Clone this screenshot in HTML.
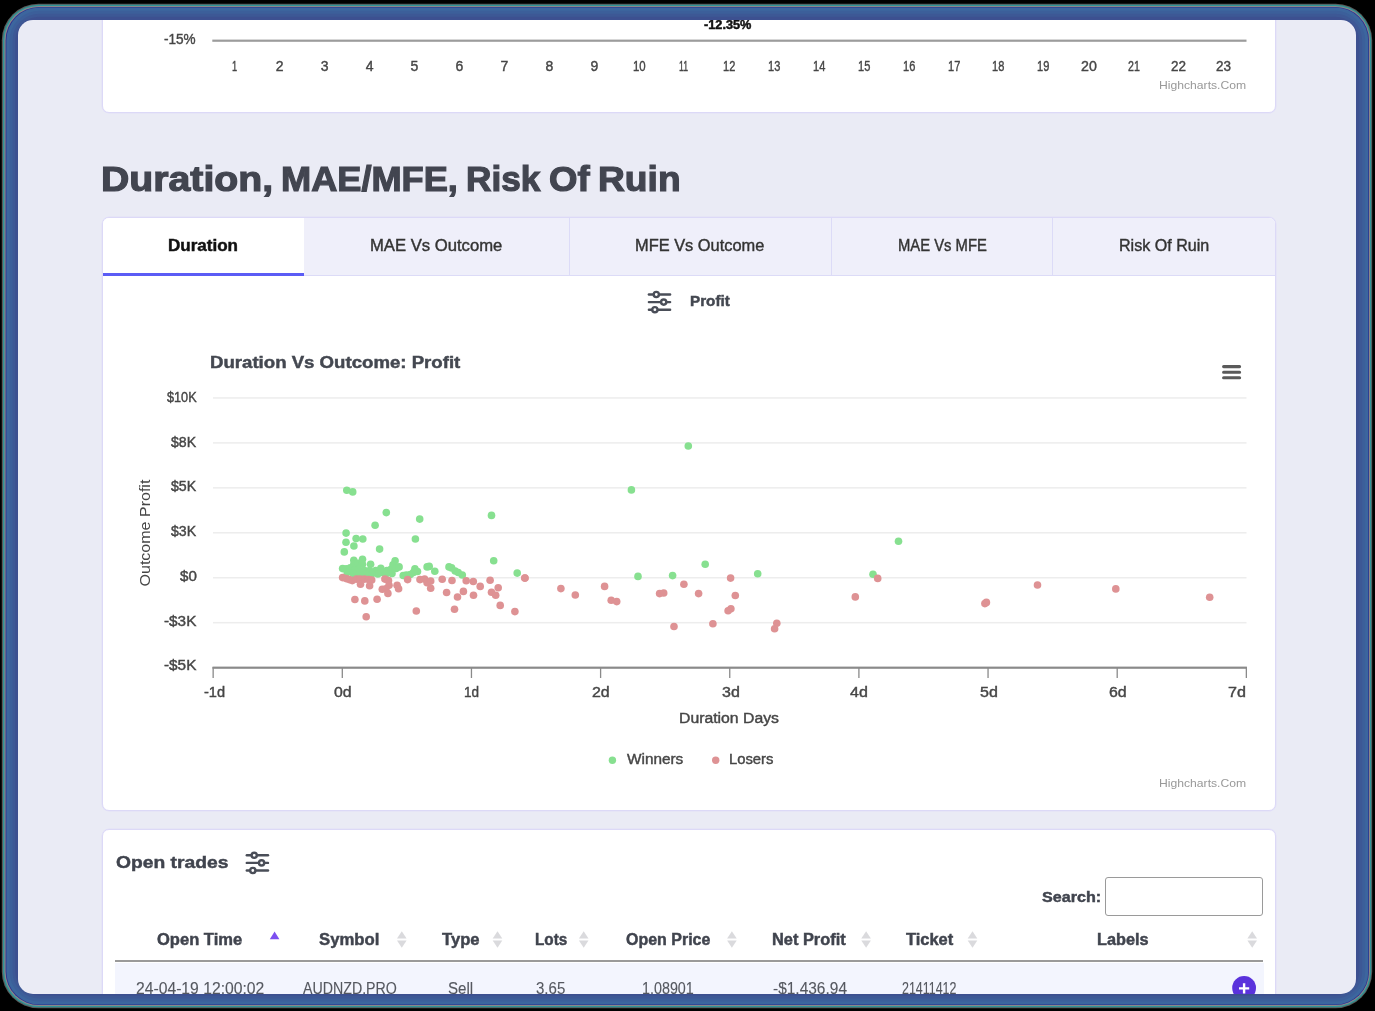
<!DOCTYPE html>
<html>
<head>
<meta charset="utf-8">
<title>Duration, MAE/MFE, Risk Of Ruin</title>
<style>
*{box-sizing:border-box;margin:0;padding:0}
html,body{width:1375px;height:1011px;overflow:hidden;background:#000;font-family:"Liberation Sans",sans-serif;}
.abs{position:absolute}
.t{position:absolute;white-space:nowrap;line-height:1;transform-origin:0 50%}
#frame{position:absolute;left:3px;top:4px;width:1368px;height:1004px;border-radius:30px;background:#465a9c;}
#screen{position:absolute;left:18px;top:20px;width:1338px;height:974px;border-radius:15px;background:#eaebf5;overflow:hidden}
/* inside #screen, coordinates are page coords via the #pg offset wrapper */
#pg{position:absolute;left:-18px;top:-20px;width:1375px;height:1011px;will-change:transform}
.card{position:absolute;background:#fff;border:1px solid #dcd9f7;border-radius:7px;box-shadow:0 0 0 0.5px #e2e0f8}
.ax{color:#474747;font-size:14px}
.th{font-weight:bold;color:#3b3f46;font-size:15px}
.td{color:#4c4f55;font-size:15px}
</style>
</head>
<body>
<svg class="abs" style="left:0;top:0" width="1375" height="1011" viewBox="0 0 1375 1011"><rect x="1.8" y="3.7" width="1370.4" height="1004.6" rx="36.5" fill="#5a5a5a"/><rect x="3.0" y="4.7" width="1368.2" height="1002.6" rx="35.5" fill="#2f9496"/><rect x="4.4" y="5.9" width="1365.6" height="1000.2" rx="34.5" fill="#8a8688"/><rect x="5.6" y="6.9" width="1363.4" height="998.2" rx="33.5" fill="#2b2f8f"/><rect x="6.4" y="7.6" width="1361.9" height="996.9" rx="32.9" fill="#3c669e"/><rect x="9.5" y="10.7" width="1355.7" height="990.9" rx="30" fill="#3c5f9a"/><rect x="12.5" y="13.7" width="1349.7" height="984.9" rx="27" fill="#3d5895"/><rect x="15.2" y="16.7" width="1344.0" height="979.1" rx="24" fill="#3d5090"/></svg>
<div id="screen"><div id="pg">

<!-- TOP CARD -->
<div class="card" style="left:102px;top:-20px;width:1174px;height:133px"></div>
<!--TOPCHART-->


<!-- TABS CARD -->
<div class="card" style="left:102px;top:217px;width:1174px;height:594px;overflow:hidden">
  <div class="abs" style="left:0;top:0;width:1174px;height:58px;background:#efeffa;border-bottom:1px solid #dcdbf7"></div>
  <div class="abs" style="left:0;top:0;width:201px;height:58px;background:#fff;border-bottom:3px solid #5b5cf5"></div>
  <div class="abs" style="left:466px;top:0;width:1px;height:57px;background:#dcdbf7"></div>
  <div class="abs" style="left:728px;top:0;width:1px;height:57px;background:#dcdbf7"></div>
  <div class="abs" style="left:949px;top:0;width:1px;height:57px;background:#dcdbf7"></div>
</div>
<!--TABS-->

<svg class="abs" style="left:0;top:0" width="1375" height="1011" viewBox="0 0 1375 1011">
<!-- top chart axis -->
<rect x="212.3" y="39.6" width="1034.2" height="2.2" fill="#9c9c9c"/>
<!-- main chart -->
<rect x="213" y="397.20" width="1033.5" height="1.5" fill="#ededed"/><rect x="213" y="442.15" width="1033.5" height="1.5" fill="#ededed"/><rect x="213" y="487.10" width="1033.5" height="1.5" fill="#ededed"/><rect x="213" y="532.05" width="1033.5" height="1.5" fill="#ededed"/><rect x="213" y="577.00" width="1033.5" height="1.5" fill="#ededed"/><rect x="213" y="621.95" width="1033.5" height="1.5" fill="#ededed"/>
<rect x="212.5" y="666.6" width="1034.4" height="2.2" fill="#8a8a8a"/>
<rect x="212.50" y="667" width="1.3" height="11" fill="#8a8a8a"/><rect x="341.65" y="667" width="1.3" height="11" fill="#8a8a8a"/><rect x="470.80" y="667" width="1.3" height="11" fill="#8a8a8a"/><rect x="599.95" y="667" width="1.3" height="11" fill="#8a8a8a"/><rect x="729.10" y="667" width="1.3" height="11" fill="#8a8a8a"/><rect x="858.25" y="667" width="1.3" height="11" fill="#8a8a8a"/><rect x="987.40" y="667" width="1.3" height="11" fill="#8a8a8a"/><rect x="1116.55" y="667" width="1.3" height="11" fill="#8a8a8a"/><rect x="1245.70" y="667" width="1.3" height="11" fill="#8a8a8a"/>
<g><circle cx="346.8" cy="490.2" r="3.8" fill="#87e090"/><circle cx="352.7" cy="491.9" r="3.8" fill="#87e090"/><circle cx="386.3" cy="512.6" r="3.8" fill="#87e090"/><circle cx="419.7" cy="519.1" r="3.8" fill="#87e090"/><circle cx="491.5" cy="515.4" r="3.8" fill="#87e090"/><circle cx="375.1" cy="525.2" r="3.8" fill="#87e090"/><circle cx="346.1" cy="533.1" r="3.8" fill="#87e090"/><circle cx="356.1" cy="538.6" r="3.8" fill="#87e090"/><circle cx="362.8" cy="539.0" r="3.8" fill="#87e090"/><circle cx="346.0" cy="542.3" r="3.8" fill="#87e090"/><circle cx="353.9" cy="546.0" r="3.8" fill="#87e090"/><circle cx="415.4" cy="539.0" r="3.8" fill="#87e090"/><circle cx="379.6" cy="549.1" r="3.8" fill="#87e090"/><circle cx="344.3" cy="551.9" r="3.8" fill="#87e090"/><circle cx="493.7" cy="560.8" r="3.8" fill="#87e090"/><circle cx="517.2" cy="573.1" r="3.8" fill="#87e090"/><circle cx="342.6" cy="568.6" r="3.8" fill="#87e090"/><circle cx="346.2" cy="568.9" r="3.8" fill="#87e090"/><circle cx="350.3" cy="567.9" r="3.8" fill="#87e090"/><circle cx="353.8" cy="560.3" r="3.8" fill="#87e090"/><circle cx="353.8" cy="564.3" r="3.8" fill="#87e090"/><circle cx="357.9" cy="563.3" r="3.8" fill="#87e090"/><circle cx="362.5" cy="559.3" r="3.8" fill="#87e090"/><circle cx="362.5" cy="564.3" r="3.8" fill="#87e090"/><circle cx="358.4" cy="569.4" r="3.8" fill="#87e090"/><circle cx="354.3" cy="570.5" r="3.8" fill="#87e090"/><circle cx="364.5" cy="570.5" r="3.8" fill="#87e090"/><circle cx="370.6" cy="564.3" r="3.8" fill="#87e090"/><circle cx="369.6" cy="570.5" r="3.8" fill="#87e090"/><circle cx="375.7" cy="570.5" r="3.8" fill="#87e090"/><circle cx="380.8" cy="568.4" r="3.8" fill="#87e090"/><circle cx="381.8" cy="572.5" r="3.8" fill="#87e090"/><circle cx="386.9" cy="570.5" r="3.8" fill="#87e090"/><circle cx="391.0" cy="569.4" r="3.8" fill="#87e090"/><circle cx="395.1" cy="560.8" r="3.8" fill="#87e090"/><circle cx="393.0" cy="564.9" r="3.8" fill="#87e090"/><circle cx="396.1" cy="568.4" r="3.8" fill="#87e090"/><circle cx="399.1" cy="566.9" r="3.8" fill="#87e090"/><circle cx="392.0" cy="573.5" r="3.8" fill="#87e090"/><circle cx="385.9" cy="574.0" r="3.8" fill="#87e090"/><circle cx="377.8" cy="574.0" r="3.8" fill="#87e090"/><circle cx="371.7" cy="574.0" r="3.8" fill="#87e090"/><circle cx="365.5" cy="574.0" r="3.8" fill="#87e090"/><circle cx="359.4" cy="574.0" r="3.8" fill="#87e090"/><circle cx="353.3" cy="573.5" r="3.8" fill="#87e090"/><circle cx="347.2" cy="572.5" r="3.8" fill="#87e090"/><circle cx="403.2" cy="575.5" r="3.8" fill="#87e090"/><circle cx="406.3" cy="575.0" r="3.8" fill="#87e090"/><circle cx="410.3" cy="574.5" r="3.8" fill="#87e090"/><circle cx="414.9" cy="568.9" r="3.8" fill="#87e090"/><circle cx="417.5" cy="571.5" r="3.8" fill="#87e090"/><circle cx="413.4" cy="572.5" r="3.8" fill="#87e090"/><circle cx="427.1" cy="566.9" r="3.8" fill="#87e090"/><circle cx="429.2" cy="566.4" r="3.8" fill="#87e090"/><circle cx="434.8" cy="571.3" r="3.8" fill="#87e090"/><circle cx="449.0" cy="566.9" r="3.8" fill="#87e090"/><circle cx="451.6" cy="567.9" r="3.8" fill="#87e090"/><circle cx="455.2" cy="571.0" r="3.8" fill="#87e090"/><circle cx="458.2" cy="572.5" r="3.8" fill="#87e090"/><circle cx="462.3" cy="575.0" r="3.8" fill="#87e090"/><circle cx="688.3" cy="446.0" r="3.8" fill="#87e090"/><circle cx="631.4" cy="489.9" r="3.8" fill="#87e090"/><circle cx="705.2" cy="564.3" r="3.8" fill="#87e090"/><circle cx="638.0" cy="576.4" r="3.8" fill="#87e090"/><circle cx="672.6" cy="575.6" r="3.8" fill="#87e090"/><circle cx="757.7" cy="573.7" r="3.8" fill="#87e090"/><circle cx="873.0" cy="574.2" r="3.8" fill="#87e090"/><circle cx="898.5" cy="541.3" r="3.8" fill="#87e090"/></g>
<g><circle cx="446.6" cy="592.5" r="3.8" fill="#de9294"/><circle cx="463.4" cy="591.4" r="3.8" fill="#de9294"/><circle cx="457.5" cy="597.0" r="3.8" fill="#de9294"/><circle cx="473.5" cy="595.3" r="3.8" fill="#de9294"/><circle cx="454.5" cy="609.3" r="3.8" fill="#de9294"/><circle cx="416.3" cy="611.0" r="3.8" fill="#de9294"/><circle cx="500.2" cy="605.4" r="3.8" fill="#de9294"/><circle cx="514.9" cy="611.6" r="3.8" fill="#de9294"/><circle cx="354.9" cy="599.5" r="3.8" fill="#de9294"/><circle cx="364.8" cy="600.9" r="3.8" fill="#de9294"/><circle cx="377.1" cy="599.2" r="3.8" fill="#de9294"/><circle cx="366.2" cy="616.7" r="3.8" fill="#de9294"/><circle cx="490.1" cy="580.2" r="3.8" fill="#de9294"/><circle cx="498.2" cy="587.7" r="3.8" fill="#de9294"/><circle cx="491.5" cy="592.3" r="3.8" fill="#de9294"/><circle cx="495.7" cy="595.3" r="3.8" fill="#de9294"/><circle cx="524.8" cy="578.0" r="3.8" fill="#de9294"/><circle cx="480.2" cy="586.4" r="3.8" fill="#de9294"/><circle cx="473.3" cy="581.5" r="3.8" fill="#de9294"/><circle cx="466.2" cy="580.7" r="3.8" fill="#de9294"/><circle cx="452.0" cy="580.5" r="3.8" fill="#de9294"/><circle cx="442.2" cy="579.3" r="3.8" fill="#de9294"/><circle cx="342.6" cy="577.6" r="3.8" fill="#de9294"/><circle cx="346.2" cy="578.6" r="3.8" fill="#de9294"/><circle cx="349.3" cy="579.6" r="3.8" fill="#de9294"/><circle cx="352.3" cy="580.6" r="3.8" fill="#de9294"/><circle cx="356.4" cy="579.1" r="3.8" fill="#de9294"/><circle cx="359.9" cy="579.1" r="3.8" fill="#de9294"/><circle cx="360.5" cy="584.2" r="3.8" fill="#de9294"/><circle cx="364.5" cy="579.1" r="3.8" fill="#de9294"/><circle cx="368.6" cy="579.6" r="3.8" fill="#de9294"/><circle cx="371.7" cy="580.1" r="3.8" fill="#de9294"/><circle cx="369.6" cy="585.7" r="3.8" fill="#de9294"/><circle cx="384.9" cy="579.1" r="3.8" fill="#de9294"/><circle cx="388.5" cy="580.6" r="3.8" fill="#de9294"/><circle cx="389.0" cy="585.2" r="3.8" fill="#de9294"/><circle cx="382.3" cy="589.3" r="3.8" fill="#de9294"/><circle cx="385.9" cy="588.8" r="3.8" fill="#de9294"/><circle cx="387.9" cy="593.4" r="3.8" fill="#de9294"/><circle cx="397.1" cy="585.2" r="3.8" fill="#de9294"/><circle cx="398.6" cy="588.8" r="3.8" fill="#de9294"/><circle cx="407.6" cy="579.6" r="3.8" fill="#de9294"/><circle cx="420.0" cy="579.6" r="3.8" fill="#de9294"/><circle cx="424.6" cy="579.1" r="3.8" fill="#de9294"/><circle cx="427.1" cy="582.7" r="3.8" fill="#de9294"/><circle cx="430.7" cy="581.1" r="3.8" fill="#de9294"/><circle cx="430.7" cy="588.3" r="3.8" fill="#de9294"/><circle cx="525.0" cy="578.1" r="3.8" fill="#de9294"/><circle cx="560.9" cy="588.6" r="3.8" fill="#de9294"/><circle cx="575.3" cy="595.0" r="3.8" fill="#de9294"/><circle cx="604.6" cy="586.4" r="3.8" fill="#de9294"/><circle cx="611.2" cy="600.2" r="3.8" fill="#de9294"/><circle cx="616.7" cy="601.6" r="3.8" fill="#de9294"/><circle cx="659.6" cy="593.6" r="3.8" fill="#de9294"/><circle cx="663.7" cy="593.0" r="3.8" fill="#de9294"/><circle cx="683.9" cy="584.2" r="3.8" fill="#de9294"/><circle cx="698.6" cy="593.6" r="3.8" fill="#de9294"/><circle cx="730.6" cy="578.1" r="3.8" fill="#de9294"/><circle cx="735.3" cy="595.5" r="3.8" fill="#de9294"/><circle cx="730.9" cy="608.8" r="3.8" fill="#de9294"/><circle cx="728.1" cy="610.7" r="3.8" fill="#de9294"/><circle cx="674.0" cy="626.5" r="3.8" fill="#de9294"/><circle cx="712.9" cy="623.7" r="3.8" fill="#de9294"/><circle cx="776.8" cy="623.2" r="3.8" fill="#de9294"/><circle cx="774.6" cy="628.7" r="3.8" fill="#de9294"/><circle cx="855.3" cy="596.9" r="3.8" fill="#de9294"/><circle cx="877.7" cy="578.4" r="3.8" fill="#de9294"/><circle cx="1037.5" cy="585.0" r="3.8" fill="#de9294"/><circle cx="1115.8" cy="588.9" r="3.8" fill="#de9294"/><circle cx="1209.7" cy="597.2" r="3.8" fill="#de9294"/><circle cx="984.9" cy="603.6" r="3.8" fill="#de9294"/><circle cx="986.4" cy="602.4" r="3.8" fill="#de9294"/></g>
<circle cx="612.4" cy="760.2" r="3.7" fill="#87e090"/>
<circle cx="715.7" cy="760.2" r="3.7" fill="#de9294"/>
<!-- hamburger -->
<g stroke="#5a5a5a" stroke-width="3.1" stroke-linecap="round"><path d="M1223.6 366.6H1239.6M1223.6 372.2H1239.6M1223.6 377.8H1239.6"/></g>
</svg>

<!-- OPEN TRADES CARD -->
<div class="card" style="left:102px;top:829px;width:1174px;height:220px"></div>

<div class="abs" style="left:1104.5px;top:876.5px;width:158.5px;height:39.5px;border:1px solid #9a9a9a;border-radius:3px;background:#fff"></div>
<div class="abs" style="left:115px;top:960.3px;width:1148px;height:2px;background:#9a9a9a"></div>
<div class="abs" style="left:115px;top:962.5px;width:1148.5px;height:40px;background:#f3f5fe"></div>
<svg class="abs" style="left:0;top:0" width="1375" height="1011" viewBox="0 0 1375 1011">
<g stroke="#4a4e58" stroke-width="2.4" stroke-linecap="round" fill="#fff"><path d="M648.9 294.5H670.1"/><circle cx="656.3" cy="294.5" r="2.6"/><path d="M648.9 302.1H670.1"/><circle cx="663.7" cy="302.1" r="2.6"/><path d="M648.9 309.7H670.1"/><circle cx="654.9" cy="309.7" r="2.6"/></g>
<g stroke="#4a4e58" stroke-width="2.4" stroke-linecap="round" fill="#fff"><path d="M246.8 855.3H268.0"/><circle cx="254.2" cy="855.3" r="2.6"/><path d="M246.8 862.9H268.0"/><circle cx="261.6" cy="862.9" r="2.6"/><path d="M246.8 870.5H268.0"/><circle cx="252.8" cy="870.5" r="2.6"/></g>
<path d="M269.8 939.3L274.6 931.6L279.4 939.3Z" fill="#7d4ff0"/>
<path d="M397.0 938.6L401.8 931.2L406.6 938.6Z" fill="#dadadd"/><path d="M397.0 940.4L401.8 947.8L406.6 940.4Z" fill="#dadadd"/><path d="M492.7 938.6L497.5 931.2L502.3 938.6Z" fill="#dadadd"/><path d="M492.7 940.4L497.5 947.8L502.3 940.4Z" fill="#dadadd"/><path d="M578.9 938.6L583.7 931.2L588.5 938.6Z" fill="#dadadd"/><path d="M578.9 940.4L583.7 947.8L588.5 940.4Z" fill="#dadadd"/><path d="M727.1 938.6L731.9 931.2L736.7 938.6Z" fill="#dadadd"/><path d="M727.1 940.4L731.9 947.8L736.7 940.4Z" fill="#dadadd"/><path d="M861.3 938.6L866.1 931.2L870.9 938.6Z" fill="#dadadd"/><path d="M861.3 940.4L866.1 947.8L870.9 940.4Z" fill="#dadadd"/><path d="M967.7 938.6L972.5 931.2L977.3 938.6Z" fill="#dadadd"/><path d="M967.7 940.4L972.5 947.8L977.3 940.4Z" fill="#dadadd"/><path d="M1247.4 938.6L1252.2 931.2L1257.0 938.6Z" fill="#dadadd"/><path d="M1247.4 940.4L1252.2 947.8L1257.0 940.4Z" fill="#dadadd"/>
<circle cx="1244.1" cy="988" r="11.9" fill="#5a32dc"/>
<path d="M1239 988.4H1249.2M1244.1 983.3V993.5" stroke="#fff" stroke-width="2.4"/>
</svg>
<div class="t" style="left:164.29px;top:32px;font-size:14px;color:#464646;transform:scaleX(0.9683);-webkit-text-stroke:0.4px #464646">-15%</div>
<div class="t" style="left:704.24px;top:19px;font-size:12px;color:#111;transform:scaleX(1.0599);font-weight:bold;-webkit-text-stroke:0.45px #111">-12.35%</div>
<div class="t" style="left:231.80px;top:59px;font-size:14px;color:#464646;transform:scaleX(0.6622);-webkit-text-stroke:0.4px #464646">1</div>
<div class="t" style="left:275.74px;top:59px;font-size:14px;color:#464646;transform:scaleX(1.0000);-webkit-text-stroke:0.4px #464646">2</div>
<div class="t" style="left:320.70px;top:59px;font-size:14px;color:#464646;transform:scaleX(1.0000);-webkit-text-stroke:0.4px #464646">3</div>
<div class="t" style="left:365.66px;top:59px;font-size:14px;color:#464646;transform:scaleX(1.0000);-webkit-text-stroke:0.4px #464646">4</div>
<div class="t" style="left:410.62px;top:59px;font-size:14px;color:#464646;transform:scaleX(1.0000);-webkit-text-stroke:0.4px #464646">5</div>
<div class="t" style="left:455.58px;top:59px;font-size:14px;color:#464646;transform:scaleX(1.0000);-webkit-text-stroke:0.4px #464646">6</div>
<div class="t" style="left:500.54px;top:59px;font-size:14px;color:#464646;transform:scaleX(1.0000);-webkit-text-stroke:0.4px #464646">7</div>
<div class="t" style="left:545.50px;top:59px;font-size:14px;color:#464646;transform:scaleX(1.0000);-webkit-text-stroke:0.4px #464646">8</div>
<div class="t" style="left:590.46px;top:59px;font-size:14px;color:#464646;transform:scaleX(1.0000);-webkit-text-stroke:0.4px #464646">9</div>
<div class="t" style="left:632.57px;top:59px;font-size:14px;color:#464646;transform:scaleX(0.8165);-webkit-text-stroke:0.4px #464646">10</div>
<div class="t" style="left:679.48px;top:59px;font-size:14px;color:#464646;transform:scaleX(0.6220);-webkit-text-stroke:0.4px #464646">11</div>
<div class="t" style="left:722.71px;top:59px;font-size:14px;color:#464646;transform:scaleX(0.7902);-webkit-text-stroke:0.4px #464646">12</div>
<div class="t" style="left:767.67px;top:59px;font-size:14px;color:#464646;transform:scaleX(0.7902);-webkit-text-stroke:0.4px #464646">13</div>
<div class="t" style="left:812.63px;top:59px;font-size:14px;color:#464646;transform:scaleX(0.7902);-webkit-text-stroke:0.4px #464646">14</div>
<div class="t" style="left:857.59px;top:59px;font-size:14px;color:#464646;transform:scaleX(0.7902);-webkit-text-stroke:0.4px #464646">15</div>
<div class="t" style="left:902.55px;top:59px;font-size:14px;color:#464646;transform:scaleX(0.7902);-webkit-text-stroke:0.4px #464646">16</div>
<div class="t" style="left:947.51px;top:59px;font-size:14px;color:#464646;transform:scaleX(0.7902);-webkit-text-stroke:0.4px #464646">17</div>
<div class="t" style="left:992.47px;top:59px;font-size:14px;color:#464646;transform:scaleX(0.7902);-webkit-text-stroke:0.4px #464646">18</div>
<div class="t" style="left:1037.43px;top:59px;font-size:14px;color:#464646;transform:scaleX(0.7902);-webkit-text-stroke:0.4px #464646">19</div>
<div class="t" style="left:1081.02px;top:59px;font-size:14px;color:#464646;transform:scaleX(1.0132);-webkit-text-stroke:0.4px #464646">20</div>
<div class="t" style="left:1127.98px;top:59px;font-size:14px;color:#464646;transform:scaleX(0.7599);-webkit-text-stroke:0.4px #464646">21</div>
<div class="t" style="left:1171.33px;top:59px;font-size:14px;color:#464646;transform:scaleX(0.9638);-webkit-text-stroke:0.4px #464646">22</div>
<div class="t" style="left:1216.29px;top:59px;font-size:14px;color:#464646;transform:scaleX(0.9638);-webkit-text-stroke:0.4px #464646">23</div>
<div class="t" style="left:1159.10px;top:80px;font-size:11px;color:#999;transform:scaleX(1.1055)">Highcharts.Com</div>
<div class="t" style="left:100.85px;top:162px;font-size:35.5px;color:#424550;transform:scaleX(1.1049);font-weight:bold;-webkit-text-stroke:1.2px #424550">Duration,</div>
<div class="t" style="left:281.37px;top:162px;font-size:35.5px;color:#424550;transform:scaleX(1.0194);font-weight:bold;-webkit-text-stroke:1.2px #424550">MAE/MFE,</div>
<div class="t" style="left:465.81px;top:162px;font-size:35.5px;color:#424550;transform:scaleX(0.9914);font-weight:bold;-webkit-text-stroke:1.2px #424550">Risk</div>
<div class="t" style="left:548.59px;top:162px;font-size:35.5px;color:#424550;transform:scaleX(1.0298);font-weight:bold;-webkit-text-stroke:1.2px #424550">Of</div>
<div class="t" style="left:597.73px;top:162px;font-size:35.5px;color:#424550;transform:scaleX(1.0473);font-weight:bold;-webkit-text-stroke:1.2px #424550">Ruin</div>
<div class="t" style="left:167.58px;top:238px;font-size:16px;color:#111;transform:scaleX(1.0644);font-weight:bold;-webkit-text-stroke:0.45px #111">Duration</div>
<div class="t" style="left:370.27px;top:238px;font-size:16px;color:#333;transform:scaleX(1.0407);-webkit-text-stroke:0.4px #333">MAE Vs Outcome</div>
<div class="t" style="left:635.28px;top:238px;font-size:16px;color:#333;transform:scaleX(1.0242);-webkit-text-stroke:0.4px #333">MFE Vs Outcome</div>
<div class="t" style="left:897.86px;top:238px;font-size:16px;color:#333;transform:scaleX(0.9257);-webkit-text-stroke:0.4px #333">MAE Vs MFE</div>
<div class="t" style="left:1118.60px;top:238px;font-size:16px;color:#333;transform:scaleX(1.0045);-webkit-text-stroke:0.4px #333">Risk Of Ruin</div>
<div class="t" style="left:689.54px;top:294px;font-size:14px;color:#444851;transform:scaleX(1.0873);font-weight:bold;-webkit-text-stroke:0.45px #444851">Profit</div>
<div class="t" style="left:209.70px;top:355px;font-size:16px;color:#444851;transform:scaleX(1.1633);font-weight:bold;-webkit-text-stroke:0.45px #444851">Duration Vs Outcome: Profit</div>
<div class="t" style="left:166.58px;top:390px;font-size:14px;color:#464646;transform:scaleX(0.9064);-webkit-text-stroke:0.4px #464646">$10K</div>
<div class="t" style="left:171.00px;top:435px;font-size:14px;color:#464646;transform:scaleX(1.0088);-webkit-text-stroke:0.4px #464646">$8K</div>
<div class="t" style="left:171.00px;top:479px;font-size:14px;color:#464646;transform:scaleX(1.0088);-webkit-text-stroke:0.4px #464646">$5K</div>
<div class="t" style="left:171.00px;top:524px;font-size:14px;color:#464646;transform:scaleX(1.0088);-webkit-text-stroke:0.4px #464646">$3K</div>
<div class="t" style="left:179.72px;top:569px;font-size:14px;color:#464646;transform:scaleX(1.0812);-webkit-text-stroke:0.4px #464646">$0</div>
<div class="t" style="left:163.72px;top:614px;font-size:14px;color:#464646;transform:scaleX(1.0935);-webkit-text-stroke:0.4px #464646">-$3K</div>
<div class="t" style="left:163.72px;top:658px;font-size:14px;color:#464646;transform:scaleX(1.0935);-webkit-text-stroke:0.4px #464646">-$5K</div>
<div class="t" style="left:203.51px;top:685px;font-size:14px;color:#464646;transform:scaleX(1.0429);-webkit-text-stroke:0.4px #464646">-1d</div>
<div class="t" style="left:334.03px;top:685px;font-size:14px;color:#464646;transform:scaleX(1.1326);-webkit-text-stroke:0.4px #464646">0d</div>
<div class="t" style="left:463.73px;top:685px;font-size:14px;color:#464646;transform:scaleX(0.9657);-webkit-text-stroke:0.4px #464646">1d</div>
<div class="t" style="left:592.13px;top:685px;font-size:14px;color:#464646;transform:scaleX(1.1392);-webkit-text-stroke:0.4px #464646">2d</div>
<div class="t" style="left:721.63px;top:685px;font-size:14px;color:#464646;transform:scaleX(1.1458);-webkit-text-stroke:0.4px #464646">3d</div>
<div class="t" style="left:850.33px;top:685px;font-size:14px;color:#464646;transform:scaleX(1.1458);-webkit-text-stroke:0.4px #464646">4d</div>
<div class="t" style="left:979.53px;top:685px;font-size:14px;color:#464646;transform:scaleX(1.1458);-webkit-text-stroke:0.4px #464646">5d</div>
<div class="t" style="left:1108.73px;top:685px;font-size:14px;color:#464646;transform:scaleX(1.1392);-webkit-text-stroke:0.4px #464646">6d</div>
<div class="t" style="left:1228.23px;top:685px;font-size:14px;color:#464646;transform:scaleX(1.1524);-webkit-text-stroke:0.4px #464646">7d</div>
<div class="t" style="left:679.20px;top:711px;font-size:14px;color:#464646;transform:scaleX(1.1271);-webkit-text-stroke:0.4px #464646">Duration Days</div>
<div class="t" style="left:626.92px;top:752px;font-size:14px;color:#464646;transform:scaleX(1.0958);-webkit-text-stroke:0.4px #464646">Winners</div>
<div class="t" style="left:729.25px;top:752px;font-size:14px;color:#464646;transform:scaleX(1.0574);-webkit-text-stroke:0.4px #464646">Losers</div>
<div class="t" style="left:1159.10px;top:778px;font-size:11px;color:#999;transform:scaleX(1.1055)">Highcharts.Com</div>
<div class="t" style="left:116.15px;top:854px;font-size:17px;color:#40444e;transform:scaleX(1.1332);font-weight:bold;-webkit-text-stroke:0.45px #40444e">Open trades</div>
<div class="t" style="left:1041.84px;top:889px;font-size:15px;color:#40444e;transform:scaleX(1.0756);font-weight:bold;-webkit-text-stroke:0.45px #40444e">Search:</div>
<div class="t" style="left:157.43px;top:932px;font-size:16px;color:#40444e;transform:scaleX(1.0332);font-weight:bold;-webkit-text-stroke:0.45px #40444e">Open Time</div>
<div class="t" style="left:319.14px;top:932px;font-size:16px;color:#40444e;transform:scaleX(1.0451);font-weight:bold;-webkit-text-stroke:0.45px #40444e">Symbol</div>
<div class="t" style="left:441.63px;top:932px;font-size:16px;color:#40444e;transform:scaleX(1.0379);font-weight:bold;-webkit-text-stroke:0.45px #40444e">Type</div>
<div class="t" style="left:534.56px;top:932px;font-size:16px;color:#40444e;transform:scaleX(0.9542);font-weight:bold;-webkit-text-stroke:0.45px #40444e">Lots</div>
<div class="t" style="left:625.62px;top:932px;font-size:16px;color:#40444e;transform:scaleX(0.9985);font-weight:bold;-webkit-text-stroke:0.45px #40444e">Open Price</div>
<div class="t" style="left:771.81px;top:932px;font-size:16px;color:#40444e;transform:scaleX(1.0233);font-weight:bold;-webkit-text-stroke:0.45px #40444e">Net Profit</div>
<div class="t" style="left:905.93px;top:932px;font-size:16px;color:#40444e;transform:scaleX(1.0281);font-weight:bold;-webkit-text-stroke:0.45px #40444e">Ticket</div>
<div class="t" style="left:1096.61px;top:932px;font-size:16px;color:#40444e;transform:scaleX(1.0171);font-weight:bold;-webkit-text-stroke:0.45px #40444e">Labels</div>
<div class="t" style="left:135.66px;top:981px;font-size:16px;color:#555860;transform:scaleX(0.9810);-webkit-text-stroke:0.12px #555860">24-04-19 12:00:02</div>
<div class="t" style="left:302.55px;top:981px;font-size:16px;color:#555860;transform:scaleX(0.8876);-webkit-text-stroke:0.12px #555860">AUDNZD.PRO</div>
<div class="t" style="left:448.36px;top:981px;font-size:16px;color:#555860;transform:scaleX(0.9449);-webkit-text-stroke:0.12px #555860">Sell</div>
<div class="t" style="left:536.26px;top:981px;font-size:16px;color:#555860;transform:scaleX(0.9406);-webkit-text-stroke:0.12px #555860">3.65</div>
<div class="t" style="left:641.76px;top:981px;font-size:16px;color:#555860;transform:scaleX(0.8956);-webkit-text-stroke:0.12px #555860">1.08901</div>
<div class="t" style="left:772.66px;top:981px;font-size:16px;color:#555860;transform:scaleX(0.9670);-webkit-text-stroke:0.12px #555860">-$1,436.94</div>
<div class="t" style="left:902.25px;top:981px;font-size:16px;color:#555860;transform:scaleX(0.7775);-webkit-text-stroke:0.12px #555860">21411412</div>
<div class="t" style="left:144.6px;top:532.5px;font-size:14px;color:#464646;transform-origin:0 0;transform:rotate(-90deg) translate(-53.50px,-7.00px) scaleX(1.1447)">Outcome Profit</div>

</div></div>
</body>
</html>
